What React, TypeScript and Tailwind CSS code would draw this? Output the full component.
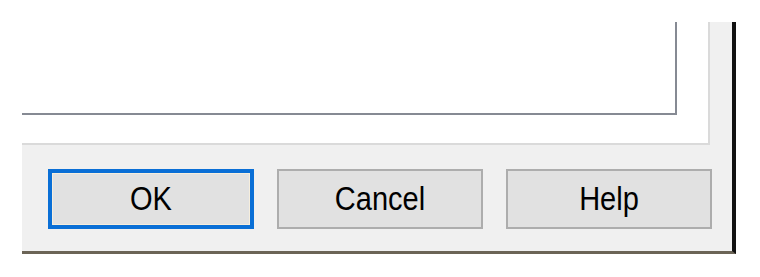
import React from 'react';

const buttons = [
  { label: 'OK', focused: true },
  { label: 'Cancel', focused: false },
  { label: 'Help', focused: false },
];

export default function App() {
  return (
    <div className="w-[760px] h-[277px] bg-white pl-[22px] pt-[22px] overflow-hidden">
      {/* dialog window (cropped at top/left) */}
      <div className="w-[714px] h-[232px] bg-[#f0f0f0] border-r-[4px] border-r-[#111111] border-b-[3px] border-b-[#6b6456] flex flex-col">
        {/* tab page */}
        <div className="w-[688px] h-[123px] bg-white border-r-2 border-b-2 border-[#dadada]">
          {/* list box */}
          <div className="w-[655px] h-[93px] bg-white border-r-2 border-b-2 border-[#868a93]" />
        </div>

        {/* button row */}
        <div className="flex gap-[23px] pl-[26px] pt-[24px]">
          {buttons.map(b => (
            <div
              key={b.label}
              className={`w-[206px] h-[60px] flex items-center justify-center bg-[#e1e1e1] text-black ${
                b.focused
                  ? 'border-[4px] border-[#0a6fd6] shadow-[inset_0_0_0_1px_#f6eedd]'
                  : 'border-2 border-[#adadad]'
              }`}
              style={{ fontFamily: '"Liberation Sans", Arial, sans-serif' }}
            >
              <span className="text-[29px] leading-none scale-y-[1.15] inline-block">{b.label}</span>
            </div>
          ))}
        </div>
      </div>
    </div>
  );
}
